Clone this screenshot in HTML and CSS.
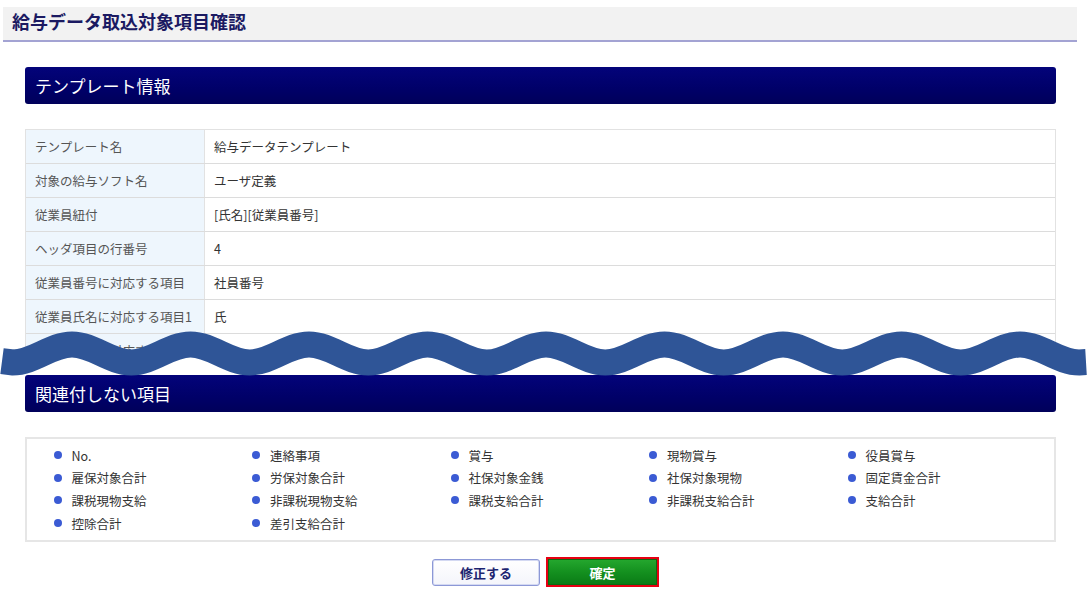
FILE: index.html
```html
<!DOCTYPE html>
<html lang="ja">
<head>
<meta charset="utf-8">
<title>給与データ取込対象項目確認</title>
<link rel="stylesheet" href="styles.css">
</head>
<body>
<div class="page">
  <div class="titlebar"><h1 class="title">給与データ取込対象項目確認</h1></div>
  <div class="content">
    <div class="sec-head">テンプレート情報</div>
    <div class="table-clip">
      <div class="info">
        <div class="row"><div class="label">テンプレート名</div><div class="value">給与データテンプレート</div></div>
        <div class="row"><div class="label">対象の給与ソフト名</div><div class="value">ユーザ定義</div></div>
        <div class="row"><div class="label">従業員紐付</div><div class="value">[氏名][従業員番号]</div></div>
        <div class="row"><div class="label">ヘッダ項目の行番号</div><div class="value">4</div></div>
        <div class="row"><div class="label">従業員番号に対応する項目</div><div class="value">社員番号</div></div>
        <div class="row"><div class="label">従業員氏名に対応する項目1</div><div class="value">氏</div></div>
        <div class="row"><div class="label">従業員氏名に対応する項目2</div><div class="value">名</div></div>
      </div>
    </div>
    <div class="sec-head sec2">関連付しない項目</div>
    <div class="list-box">
      <ul class="items">
        <li>No.</li><li>連絡事項</li><li>賞与</li><li>現物賞与</li><li>役員賞与</li>
        <li>雇保対象合計</li><li>労保対象合計</li><li>社保対象金銭</li><li>社保対象現物</li><li>固定賃金合計</li>
        <li>課税現物支給</li><li>非課税現物支給</li><li>課税支給合計</li><li>非課税支給合計</li><li>支給合計</li>
        <li>控除合計</li><li>差引支給合計</li>
      </ul>
    </div>
    <div class="buttons">
      <button class="btn btn-edit" type="button">修正する</button>
      <button class="btn btn-ok" type="button"><span class="btn-ok-inner">確定</span></button>
    </div>
  </div>
  <svg class="wave" width="1090" height="593" viewBox="0 0 1090 593" aria-hidden="true">
    <path d="M 2,361.1 L 12.75,362.5 c 21.56,0 37.69,-18 59.25,-18 s 37.69,18 59.25,18 s 37.69,-18 59.25,-18 s 37.69,18 59.25,18 s 37.69,-18 59.25,-18 s 37.69,18 59.25,18 s 37.69,-18 59.25,-18 s 37.69,18 59.25,18 s 37.69,-18 59.25,-18 s 37.69,18 59.25,18 s 37.69,-18 59.25,-18 s 37.69,18 59.25,18 s 37.69,-18 59.25,-18 s 37.69,18 59.25,18 s 37.69,-18 59.25,-18 s 37.69,18 59.25,18 s 37.69,-18 59.25,-18 s 37.69,18 59.25,18 L 1086,362.1" fill="none" stroke="#2f5597" stroke-width="26" stroke-linecap="butt"/>
  </svg>
</div>
</body>
</html>
```

FILE: styles.css
```css
html, body {
  margin: 0;
  padding: 0;
  background: #ffffff;
}

body {
  font-family: "Noto Sans CJK JP", "Noto Sans", sans-serif;
  color: #333333;
}

.page {
  position: relative;
  width: 1090px;
  height: 593px;
  overflow: hidden;
  padding-top: 7px;
  box-sizing: border-box;
}

.titlebar {
  margin-left: 3px;
  width: 1074px;
  height: 33px;
  background: #f2f2f2;
  border-bottom: 2px solid #a3a3d3;
  box-sizing: content-box;
}

.title {
  margin: 0;
  padding: 5px 0 0 9px;
  font-size: 18px;
  line-height: 18px;
  font-weight: bold;
  color: #1b1a62;
}

.content {
  margin: 25px 0 0 25px;
  width: 1031px;
}

.sec-head {
  height: 37px;
  line-height: 37px;
  padding-left: 10px;
  border-radius: 3px;
  background: linear-gradient(to bottom, #03037a 0%, #000068 60%, #00005a 100%);
  color: #ffffff;
  font-size: 17px;
}

.sec2 {
  margin-top: 18px;
}

.table-clip {
  margin-top: 25px;
  height: 228px;
  overflow: hidden;
}

.info {
  border: 1px solid #e2e2e2;
  border-bottom: none;
}

.row {
  display: grid;
  grid-template-columns: 179px 1fr;
  height: 34px;
  border-bottom: 1px solid #dcdcdc;
  box-sizing: border-box;
  font-size: 12.5px;
}

.label {
  display: flex;
  align-items: center;
  padding-left: 9px;
  background: #eef6fd;
  border-right: 1px solid #e2e2e2;
  color: #555555;
}

.value {
  display: flex;
  align-items: center;
  padding-left: 9px;
  color: #333333;
}

.list-box {
  margin-top: 25px;
  height: 105px;
  border: 2px solid #e6e6e6;
  box-sizing: border-box;
  padding-top: 5px;
}

.items {
  list-style: none;
  margin: 0;
  padding: 0 0 0 26.5px;
  display: grid;
  grid-template-columns: repeat(5, 198.5px);
  grid-auto-rows: 22.6px;
}

.items li {
  display: flex;
  align-items: center;
  font-size: 12.5px;
  color: #333333;
}

.items li::before {
  content: "";
  width: 8px;
  height: 8px;
  border-radius: 50%;
  background: #3b5bd4;
  margin-right: 10px;
  flex: none;
}

.buttons {
  margin-top: 15px;
  padding-left: 10px;
  display: flex;
  justify-content: center;
  align-items: center;
  gap: 6px;
}

.btn {
  font-family: "Noto Sans CJK JP", "Noto Sans", sans-serif;
  font-size: 13px;
  font-weight: bold;
  padding: 0;
  margin: 0;
  cursor: pointer;
  box-sizing: border-box;
}

.btn-edit {
  width: 108px;
  height: 27px;
  background: linear-gradient(to bottom, #ffffff, #f4f5fb);
  border: 1px solid #8c98d6;
  border-radius: 3px;
  box-shadow: inset 0 0 0 1px #d4d9f2;
  color: #1c2470;
}

.btn-ok {
  width: 113px;
  height: 30px;
  border: 2px solid #e60012;
  background: #e60012;
  border-radius: 0;
  display: flex;
}

.btn-ok-inner {
  flex: 1;
  display: flex;
  align-items: center;
  justify-content: center;
  background: linear-gradient(to bottom, #25a82f 0%, #14901f 50%, #0a7a15 100%);
  box-shadow: inset 0 0 0 1px #0b6a12;
  color: #ffffff;
}

.wave {
  position: absolute;
  left: 0;
  top: 0;
  pointer-events: none;
}
```
